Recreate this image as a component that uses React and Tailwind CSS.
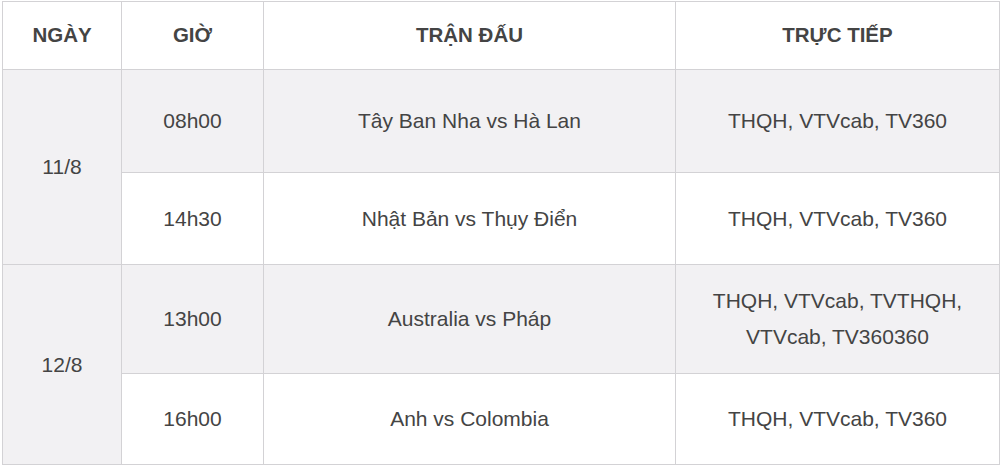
export default function App() {
  const rows = [
    { date: "11/8", span: 2, time: "08h00", match: "Tây Ban Nha vs Hà Lan", tv: ["THQH, VTVcab, TV360"], h: "h-[103px]", gray: true },
    { time: "14h30", match: "Nhật Bản vs Thụy Điển", tv: ["THQH, VTVcab, TV360"], h: "h-[92px]", gray: false },
    { date: "12/8", span: 2, time: "13h00", match: "Australia vs Pháp", tv: ["THQH, VTVcab, TVTHQH,", "VTVcab, TV360360"], h: "h-[109px]", gray: true },
    { time: "16h00", match: "Anh vs Colombia", tv: ["THQH, VTVcab, TV360"], h: "h-[91px]", gray: false },
  ];

  const cell = "border border-[#d3d2d5] text-center align-middle";

  return (
    <div className="bg-white w-[1000px] h-[468px] pt-[1px] pl-[2px] font-['Liberation_Sans',Arial,sans-serif] text-[#444]">
      <table className="table-fixed border-collapse w-[997px]">
        <colgroup>
          <col className="w-[119px]" />
          <col className="w-[142px]" />
          <col className="w-[412px]" />
          <col className="w-[324px]" />
        </colgroup>
        <thead>
          <tr className="h-[68px] text-[20.5px] font-bold">
            <th className={cell}>NGÀY</th>
            <th className={cell}>GIỜ</th>
            <th className={cell}>TRẬN ĐẤU</th>
            <th className={cell}>TRỰC TIẾP</th>
          </tr>
        </thead>
        <tbody className="text-[21px] leading-[36px]">
          {rows.map((r, i) => (
            <tr key={i} className={`${r.h} ${r.gray ? "bg-[#f2f1f3]" : "bg-white"}`}>
              {r.date && (
                <td rowSpan={r.span} className={`${cell} bg-[#f2f1f3]`}>
                  {r.date}
                </td>
              )}
              <td className={cell}>{r.time}</td>
              <td className={cell}>{r.match}</td>
              <td className={cell}>
                {r.tv.map((t, j) => (
                  <div key={j}>{t}</div>
                ))}
              </td>
            </tr>
          ))}
        </tbody>
      </table>
    </div>
  );
}
